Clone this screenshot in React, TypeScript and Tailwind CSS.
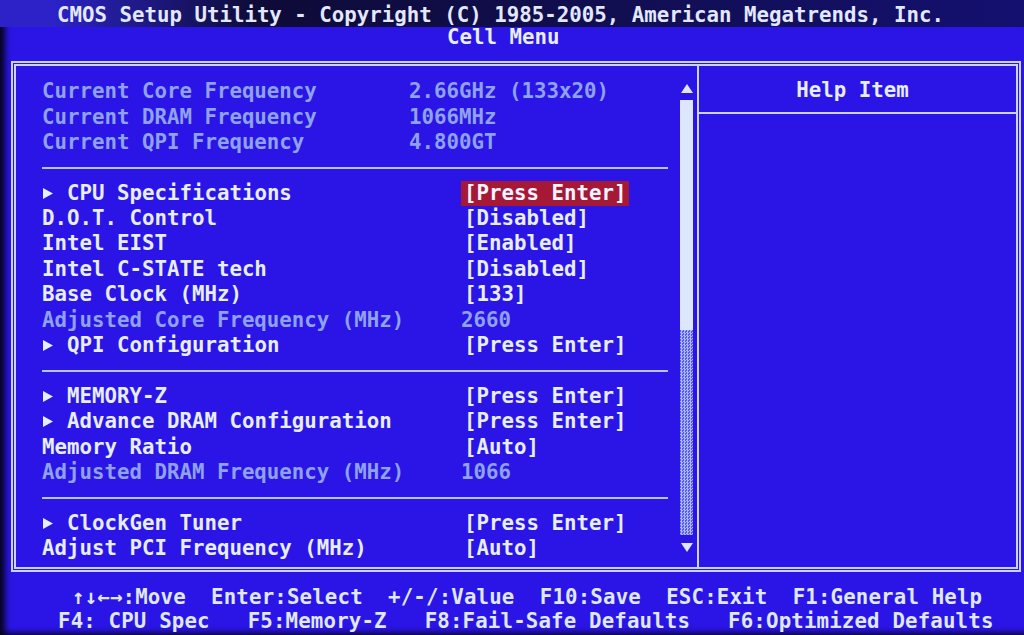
import React from 'react';

type Row =
  | { line: true }
  | { label: string; value: string; col: 'top' | 'dim' | 'set'; dim?: boolean; arrow?: boolean; selected?: boolean };

const rows: Row[] = [
  { label: 'Current Core Frequency', value: '2.66GHz (133x20)', col: 'top', dim: true },
  { label: 'Current DRAM Frequency', value: '1066MHz', col: 'top', dim: true },
  { label: 'Current QPI Frequency', value: '4.800GT', col: 'top', dim: true },
  { line: true },
  { label: 'CPU Specifications', value: '[Press Enter]', col: 'dim', arrow: true, selected: true },
  { label: 'D.O.T. Control', value: '[Disabled]', col: 'set' },
  { label: 'Intel EIST', value: '[Enabled]', col: 'set' },
  { label: 'Intel C-STATE tech', value: '[Disabled]', col: 'set' },
  { label: 'Base Clock (MHz)', value: '[133]', col: 'set' },
  { label: 'Adjusted Core Frequency (MHz)', value: '2660', col: 'dim', dim: true },
  { label: 'QPI Configuration', value: '[Press Enter]', col: 'set', arrow: true },
  { line: true },
  { label: 'MEMORY-Z', value: '[Press Enter]', col: 'set', arrow: true },
  { label: 'Advance DRAM Configuration', value: '[Press Enter]', col: 'set', arrow: true },
  { label: 'Memory Ratio', value: '[Auto]', col: 'set' },
  { label: 'Adjusted DRAM Frequency (MHz)', value: '1066', col: 'dim', dim: true },
  { line: true },
  { label: 'ClockGen Tuner', value: '[Press Enter]', col: 'set', arrow: true },
  { label: 'Adjust PCI Frequency (MHz)', value: '[Auto]', col: 'set' },
];

// label column widths, so the values land on their BIOS columns
const labelWidth = {
  top: 'w-[367px]',
  dim: 'w-[419px]',
  set: 'w-[422px]',
};

const Pointer = () => (
  <span className="flex h-[25.4px] w-[25px] shrink-0 items-center pl-[1px]">
    <svg width="10" height="11" viewBox="0 0 10 11">
      <path d="M0 0 L10 5.5 L0 11 Z" fill="#e6eeff" />
    </svg>
  </span>
);

const MenuRow: React.FC<{ row: Row }> = ({ row }) => {
  if ('line' in row) {
    return (
      <div className="flex h-[25.4px] items-center">
        <div className="h-[2px] w-[626px] bg-[#b4c4ff]" />
      </div>
    );
  }

  const color = row.dim ? 'text-[#8ea2f0]' : 'text-[#e6eeff]';

  return (
    <div className={`flex h-[25.4px] items-center whitespace-pre ${color}`}>
      <span className={`flex shrink-0 items-center ${labelWidth[row.col]}`}>
        {row.arrow && <Pointer />}
        {row.label}
      </span>
      {row.selected ? (
        <span className="flex h-[25px] items-center bg-[#a51937] px-[3px] text-[#f2f4ff]">{row.value}</span>
      ) : (
        <span>{row.value}</span>
      )}
    </div>
  );
};

const ScrollBar = () => (
  <div className="ml-[12px] flex w-[13px] shrink-0 flex-col items-center pt-[18px]">
    <svg width="12" height="9" viewBox="0 0 12 9">
      <path d="M6 0 L12 9 L0 9 Z" fill="#dce6ff" />
    </svg>
    <div className="mt-[7px] h-[230px] w-[13px] bg-[#dde6ff]" />
    <div className="h-[205px] w-[13px] bg-[repeating-conic-gradient(#a6b8ff_0_25%,#5c55ee_0_50%)] bg-size-[3px_3px]" />
    <svg className="mt-[8px]" width="12" height="9" viewBox="0 0 12 9">
      <path d="M0 0 L12 0 L6 9 Z" fill="#dce6ff" />
    </svg>
  </div>
);

export default function App() {
  return (
    <div className="h-[635px] w-[1024px] overflow-hidden bg-[#2b15e6] font-['DejaVu_Sans_Mono','Liberation_Mono',monospace] text-[20.76px] font-bold text-[#e6eeff] shadow-[inset_7px_-4px_6px_-2px_#06041c]">
      {/* title bar */}
      <div className="h-[27px] overflow-hidden bg-linear-to-r from-[#2c22c8] from-5% via-[#0e0b38] via-25% to-[#141070] pl-[57px] pt-[3px] whitespace-pre text-[#e2e8ff]">
        <div className="leading-[24px]">CMOS Setup Utility - Copyright (C) 1985-2005, American Megatrends, Inc.</div>
      </div>
      <div className="h-[21px] pl-[447px] leading-[21px] whitespace-pre">Cell Menu</div>

      {/* main frame, double line */}
      <div className="ml-[11px] mt-[13px] h-[511px] w-[1010px] border-2 border-[#c8d4ff] p-[1px]">
        <div className="flex h-full border-2 border-[#c8d4ff]">
          <div className="flex w-[681px] shrink-0 pl-[26px]">
            <div className="w-[626px] shrink-0 pt-[13px]">
              {rows.map((row, i) => (
                <MenuRow key={i} row={row} />
              ))}
            </div>
            <ScrollBar />
          </div>
          <div className="w-[2px] shrink-0 bg-[#c8d4ff]" />
          <div className="flex flex-1 flex-col">
            <div className="flex h-[48px] items-center justify-center border-b-2 border-[#c8d4ff] pr-[10px] pt-[3px] whitespace-pre">
              Help Item
            </div>
          </div>
        </div>
      </div>

      {/* key legend */}
      <div className="pt-[13px] leading-[24px] tracking-[0.15px] whitespace-pre text-[#dfe8ff]">
        <div className="pl-[72px]">↑↓←→:Move  Enter:Select  +/-/:Value  F10:Save  ESC:Exit  F1:General Help</div>
        <div className="pl-[58px]">F4: CPU Spec   F5:Memory-Z   F8:Fail-Safe Defaults   F6:Optimized Defaults</div>
      </div>
    </div>
  );
}
